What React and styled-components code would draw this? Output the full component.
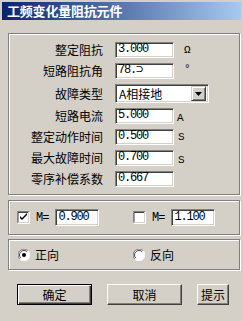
import React from "react";
import styled, { createGlobalStyle } from "styled-components";

const GlobalStyle = createGlobalStyle`
  html, body {
    margin: 0;
    padding: 0;
    background: #d4d0c8;
  }
  body {
    font-family: "Noto Sans CJK SC", "Liberation Sans", sans-serif;
    font-size: 12px;
    color: #000;
  }
`;

const Window = styled.div`
  width: 243px;
  height: 321px;
  box-sizing: border-box;
  padding: 2px;
  display: flex;
  flex-direction: column;
`;

const TitleBar = styled.div`
  height: 18px;
  background: linear-gradient(to right, #0a246a, #a6caf0);
  color: #fff;
  font-weight: bold;
  font-size: 13px;
  letter-spacing: -0.2px;
  line-height: 18px;
  padding-left: 5px;
  white-space: nowrap;
`;

const Body = styled.div`
  padding: 13px 0 0 6px;
  display: flex;
  flex-direction: column;
`;

const GroupBox = styled.div`
  width: 232px;
  height: ${(p) => p.$h}px;
  margin-top: ${(p) => p.$mt || 0}px;
  box-sizing: border-box;
  border: 1px solid #808080;
  box-shadow: inset 1px 1px 0 #fff, 1px 1px 0 #fff;
`;

const FieldGrid = styled.div`
  display: grid;
  grid-template-columns: 94px 59px 23px;
  column-gap: 12px;
  row-gap: 5px;
  padding-top: 8px;
  align-items: center;
`;

const Label = styled.div`
  text-align: right;
  line-height: 16px;
  white-space: nowrap;
`;

const Edit = styled.div`
  height: ${(p) => p.$h || 16}px;
  width: ${(p) => (p.$w ? `${p.$w}px` : "auto")};
  box-sizing: border-box;
  background: #fff;
  border-top: 1px solid #808080;
  border-left: 1px solid #808080;
  border-right: 1px solid #fff;
  border-bottom: 1px solid #fff;
  box-shadow: inset 1px 1px 0 #404040, inset -1px -1px 0 #d4d0c8;
  padding-left: 2px;
  font-family: "Liberation Mono", "DejaVu Sans Mono", monospace;
  font-size: 12px;
  letter-spacing: -1.2px;
  line-height: ${(p) => (p.$h || 16) - 3}px;
  white-space: nowrap;
  overflow: hidden;
`;

const Unit = styled.div`
  font-family: "Liberation Mono", "DejaVu Sans Mono", monospace;
  font-size: 11px;
  margin-left: ${(p) => p.$ml || 0}px;
  align-self: ${(p) => p.$align || "center"};
  margin-top: ${(p) => p.$mt || 0}px;
  line-height: 12px;
`;

const Combo = styled.div`
  grid-column: 2 / span 2;
  height: 19px;
  box-sizing: border-box;
  background: #fff;
  border-top: 1px solid #808080;
  border-left: 1px solid #808080;
  border-right: 1px solid #fff;
  border-bottom: 1px solid #fff;
  box-shadow: inset 1px 1px 0 #404040, inset -1px -1px 0 #d4d0c8;
  display: flex;
  align-items: center;
  padding: 2px 2px 2px 3px;
`;

const ComboText = styled.div`
  flex: 1;
  line-height: 15px;
  white-space: nowrap;
`;

const ComboButton = styled.div`
  width: 15px;
  height: 15px;
  box-sizing: border-box;
  background: #d4d0c8;
  border-top: 1px solid #d4d0c8;
  border-left: 1px solid #d4d0c8;
  border-right: 1px solid #404040;
  border-bottom: 1px solid #404040;
  box-shadow: inset 1px 1px 0 #fff, inset -1px -1px 0 #808080;
  display: flex;
  align-items: center;
  justify-content: center;
`;

const Row = styled.div`
  display: flex;
  align-items: center;
  height: 100%;
  padding-left: ${(p) => p.$pl}px;
`;

const Item = styled.div`
  display: flex;
  align-items: center;
  width: ${(p) => p.$w}px;
`;

const MLabel = styled.span`
  font-family: "Liberation Mono", "DejaVu Sans Mono", monospace;
  font-size: 12px;
  letter-spacing: -1px;
  margin: 0 7px 0 6px;
`;

const RadioText = styled.span`
  margin-left: 5px;
  line-height: 14px;
`;

const ButtonRow = styled.div`
  display: flex;
  gap: 15px;
  margin: 14px 0 0 9px;
`;

const Button = styled.div`
  width: ${(p) => p.$w}px;
  height: 21px;
  box-sizing: border-box;
  display: flex;
  align-items: center;
  justify-content: center;
  background: #d4d0c8;
  ${(p) =>
    p.$default
      ? `border: 1px solid #000;
         box-shadow: inset 1px 1px 0 #fff, inset -1px -1px 0 #404040, inset -2px -2px 0 #808080;`
      : `border-top: 1px solid #fff;
         border-left: 1px solid #fff;
         border-right: 1px solid #404040;
         border-bottom: 1px solid #404040;
         box-shadow: inset -1px -1px 0 #808080;`}
  font-size: 12px;
  line-height: 14px;
`;

const Arrow = () => (
  <svg width="7" height="4" viewBox="0 0 7 4">
    <path d="M0 0h7L3.5 4z" fill="#000" />
  </svg>
);

const CheckBox = ({ checked }) => (
  <svg width="13" height="13" viewBox="0 0 13 13">
    <rect x="0" y="0" width="13" height="13" fill="#fff" />
    <path d="M0 12.5V0.5H12.5" stroke="#808080" fill="none" />
    <path d="M1 11.5V1.5H11.5" stroke="#404040" fill="none" />
    <path d="M1 11.5H11.5V1" stroke="#d4d0c8" fill="none" />
    {checked && <path d="M3 5v2l2 2 5-5v-2l-5 5z" fill="#000" />}
  </svg>
);

const Radio = ({ checked }) => (
  <svg width="12" height="12" viewBox="0 0 12 12">
    <circle cx="6" cy="6" r="5.5" fill="#fff" />
    <path d="M1.8 10.2A5.5 5.5 0 0 1 10.2 1.8" stroke="#808080" fill="none" />
    <path d="M2.8 9.2A4.2 4.2 0 0 1 9.2 2.8" stroke="#404040" fill="none" />
    <path d="M10.2 1.8A5.5 5.5 0 0 1 1.8 10.2" stroke="#fff" fill="none" />
    {checked && <circle cx="6" cy="6" r="2" fill="#000" />}
  </svg>
);

const fields = [
  { label: "整定阻抗", value: "3.000", unit: "Ω", unitProps: { $ml: -2, $align: "start", $mt: 2 } },
  { label: "短路阻抗角", value: "78.", cursor: true, unit: "°", unitProps: { $ml: -2, $align: "start" } },
  { label: "故障类型", combo: "A相接地" },
  { label: "短路电流", value: "5.000", unit: "A", unitProps: { $ml: -9, $align: "end" } },
  { label: "整定动作时间", value: "0.500", unit: "S", unitProps: { $ml: -8 } },
  { label: "最大故障时间", value: "0.700", unit: "S", unitProps: { $ml: -8, $align: "end" } },
  { label: "零序补偿系数", value: "0.667" },
];

export default function App() {
  return (
    <Window>
      <GlobalStyle />
      <TitleBar>工频变化量阻抗元件</TitleBar>
      <Body>
        <GroupBox $h={162}>
          <FieldGrid>
            {fields.map((f) => (
              <React.Fragment key={f.label}>
                <Label>{f.label}</Label>
                {f.combo ? (
                  <Combo>
                    <ComboText>{f.combo}</ComboText>
                    <ComboButton>
                      <Arrow />
                    </ComboButton>
                  </Combo>
                ) : (
                  <>
                    <Edit>
                      {f.value}
                      {f.cursor && "⊃"}
                    </Edit>
                    {f.unit ? <Unit {...f.unitProps}>{f.unit}</Unit> : <span />}
                  </>
                )}
              </React.Fragment>
            ))}
          </FieldGrid>
        </GroupBox>
        <GroupBox $h={35} $mt={5}>
          <Row $pl={8}>
            <Item $w={116}>
              <CheckBox checked />
              <MLabel>M=</MLabel>
              <Edit $w={44} $h={17}>0.900</Edit>
            </Item>
            <Item $w={100}>
              <CheckBox />
              <MLabel>M=</MLabel>
              <Edit $w={44} $h={17}>1.100</Edit>
            </Item>
          </Row>
        </GroupBox>
        <GroupBox $h={31} $mt={4}>
          <Row $pl={9}>
            <Item $w={115}>
              <Radio checked />
              <RadioText>正向</RadioText>
            </Item>
            <Item $w={80}>
              <Radio />
              <RadioText>反向</RadioText>
            </Item>
          </Row>
        </GroupBox>
        <ButtonRow>
          <Button $w={75} $default>
            确定
          </Button>
          <Button $w={75}>取消</Button>
          <Button $w={32}>提示</Button>
        </ButtonRow>
      </Body>
    </Window>
  );
}
